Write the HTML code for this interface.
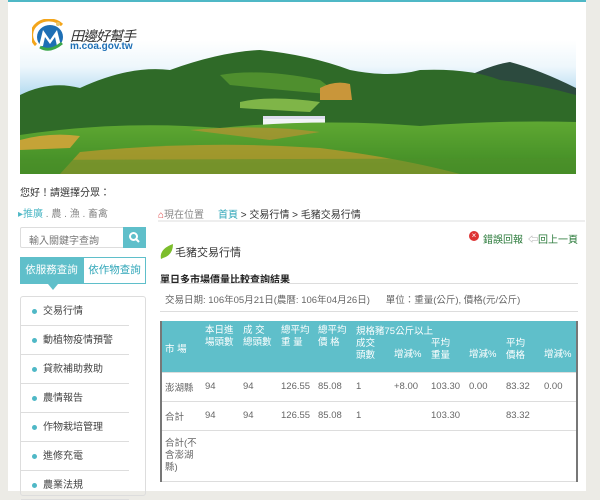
<!DOCTYPE html>
<html><head><meta charset="utf-8"><style>
*{margin:0;padding:0;box-sizing:border-box}
body{width:600px;height:491px;overflow:hidden;background:#ecebe6;font-family:"Liberation Sans","Noto Sans CJK TC",sans-serif;font-size:10px;color:#333;position:relative}
.page{position:absolute;left:8px;top:0;width:578px;height:491px;background:#fff;border-top:2px solid #4fb8c6}
.abs{position:absolute;white-space:nowrap}
.menu div{position:absolute;left:0;width:108px;height:29px;border-bottom:1px solid #ddd;padding-left:22px;line-height:29px;font-size:10px;color:#444}
.menu div:before{content:"";position:absolute;left:11px;top:12px;width:5px;height:5px;border-radius:50%;background:#4fb8c6}
table{border-collapse:collapse;position:absolute;left:160px;top:321px;width:418px;border-left:2px solid #777;border-right:2px solid #777;font-size:9.5px;color:#666}
th{background:#5fbfca;color:#fff;font-weight:normal;text-align:left;vertical-align:top;line-height:12px;padding:0 0 0 3px}
td{border-top:1px solid #ddd;padding:0 0 0 3px;vertical-align:middle;height:29px;border-bottom:1px solid #ddd}
</style></head><body>
<div class="page"></div>
<!-- banner -->
<svg class="abs" style="left:20px;top:40px" width="556" height="134" viewBox="0 0 556 134">
<defs><linearGradient id="sky" x1="0" y1="0" x2="0" y2="1"><stop offset="0" stop-color="#fff"/><stop offset=".2" stop-color="#eef7fc"/><stop offset=".45" stop-color="#a9d6ee"/></linearGradient>
<linearGradient id="g" x1="0" y1="0" x2="0" y2="1"><stop offset="0" stop-color="#5fa832"/><stop offset="1" stop-color="#3f8a25"/></linearGradient></defs>
<rect width="556" height="134" fill="url(#sky)"/>
<path d="M440 40 Q470 25 490 22 Q520 30 556 48 L556 134 L440 134Z" fill="#2c4a3e"/>
<path d="M0 55 Q30 40 60 48 Q110 25 150 30 Q200 12 240 10 Q290 15 330 30 Q370 38 400 30 Q450 28 480 40 Q520 45 556 55 L556 134 L0 134Z" fill="#2f6a28"/>
<path d="M200 35 Q240 28 300 40 L320 55 Q260 50 210 45Z" fill="#4f8f2e"/>
<path d="M220 62 Q250 55 300 62 L290 72 Q250 70 220 68Z" fill="#7fb548"/>
<path d="M300 48 Q315 40 330 44 L332 60 L300 60Z" fill="#c9963a"/>
<rect x="243" y="76" width="62" height="12" fill="#f2f4f6"/>
<rect x="243" y="76" width="62" height="3" fill="#dde"/>
<path d="M0 95 Q100 80 200 88 Q300 78 400 86 Q480 80 556 82 L556 134 L0 134Z" fill="url(#g)"/>
<path d="M0 100 Q30 92 60 96 L50 108 L0 110Z" fill="#d9a53a" opacity=".85"/>
<path d="M60 112 Q180 100 300 108 Q380 118 440 134 L40 134Z" fill="#d99a2e" opacity=".6"/>
<path d="M170 90 Q240 84 300 92 L250 100 Z" fill="#c89032" opacity=".6"/>
<path d="M0 120 L556 118 L556 134 L0 134Z" fill="#4d8f2a" opacity=".5"/>
</svg>
<!-- logo -->
<svg class="abs" style="left:32px;top:19px" width="36" height="34" viewBox="0 0 36 34">
<path d="M4 26 A15 13 0 0 1 30 6" stroke="#f3a51b" stroke-width="3" fill="none"/>
<ellipse cx="18" cy="18" rx="13" ry="12" fill="#1e6fb5"/>
<path d="M7 27 L11 11 L18 21 L25 11 L29 27 L25 27 L23 18 L18 25 L13 18 L11 27Z" fill="#fff"/>
<path d="M8 28 Q18 34 30 24" stroke="#3aa64a" stroke-width="3" fill="none"/>
<circle cx="26" cy="5" r="2" fill="#e9c56a"/>
</svg>
<div class="abs" style="left:70px;top:26px;font-size:14px;color:#333;font-style:italic;letter-spacing:-1px">田邊好幫手</div>
<div class="abs" style="left:70px;top:41px;font-size:10px;color:#1e6fb5;font-weight:bold">m.coa.gov.tw</div>
<div class="abs" style="left:20px;top:184px;font-size:10px">您好！請選擇分眾：</div>
<div class="abs" style="left:18px;top:205px;font-size:10px;color:#888"><span style="color:#4fb8c6">▸推廣</span> . 農 . 漁 . 畜禽</div>
<div class="abs" style="left:158px;top:206px;font-size:10px;color:#888"><span style="color:#d44">⌂</span>現在位置 &nbsp;&nbsp;&nbsp; <span style="color:#2fa6b8">首頁</span> <span style="color:#333">&gt; 交易行情 &gt; 毛豬交易行情</span></div>
<div class="abs" style="left:158px;top:220px;width:427px;height:2px;background:#eee"></div>
<!-- search -->
<div class="abs" style="left:20px;top:227px;width:126px;height:21px;border:1px solid #ddd;border-radius:2px;padding:4px 0 0 8px;color:#777">輸入關鍵字查詢</div>
<div class="abs" style="left:123px;top:227px;width:23px;height:21px;background:#5fbfca"></div>
<svg class="abs" style="left:128px;top:231px" width="13" height="13"><circle cx="5.5" cy="5.5" r="3.5" stroke="#fff" stroke-width="2" fill="none"/><path d="M8 8 L11 11" stroke="#fff" stroke-width="2"/></svg>
<!-- tabs -->
<div class="abs" style="left:20px;top:257px;width:63px;height:27px;background:#5fbfca;color:#fff;line-height:27px;text-align:center;font-size:10.5px">依服務查詢</div>
<div class="abs" style="left:83px;top:257px;width:63px;height:27px;border:1px solid #5fbfca;color:#2fa6b8;line-height:25px;text-align:center;font-size:10.5px">依作物查詢</div>
<div class="abs" style="left:48px;top:284px;width:0;height:0;border-left:5px solid transparent;border-right:5px solid transparent;border-top:6px solid #5fbfca"></div>
<div class="abs menu" style="left:20px;top:296px;width:126px;height:200px;border:1px solid #ddd;border-radius:3px">
<div style="top:0">交易行情</div><div style="top:29px">動植物疫情預警</div><div style="top:58px">貸款補助救助</div><div style="top:87px">農情報告</div><div style="top:116px">作物栽培管理</div><div style="top:145px">進修充電</div><div style="top:174px">農業法規</div>
</div>
<!-- right -->
<div class="abs" style="left:469px;top:231px;width:10px;height:10px;border-radius:50%;background:#d33;color:#fff;font-size:8px;line-height:10px;text-align:center">×</div>
<div class="abs" style="left:483px;top:231px;font-size:10px;color:#2a7a3a">錯誤回報</div>
<div class="abs" style="left:528px;top:231px;font-size:10px;color:#2a7a3a"><span style="color:#999">⇦</span>回上一頁</div>
<svg class="abs" style="left:159px;top:243px" width="16" height="18"><path d="M2 16 Q0 6 14 1 Q14 12 4 15Z" fill="#7cbd2c"/></svg>
<div class="abs" style="left:175px;top:244px;font-size:11px;color:#333">毛豬交易行情</div>
<div class="abs" style="left:160px;top:271px;font-size:10px;font-weight:bold;color:#222">單日多市場價量比較查詢結果</div>
<div class="abs" style="left:160px;top:283px;width:418px;height:1px;background:#ddd"></div>
<div class="abs" style="left:165px;top:292px;font-size:9.5px;color:#666">交易日期: 106年05月21日(農曆: 106年04月26日) &nbsp;&nbsp;&nbsp;&nbsp; 單位：重量(公斤), 價格(元/公斤)</div>
<div class="abs" style="left:160px;top:311px;width:418px;height:1px;background:#ddd"></div>
<table>
<tr style="height:16px"><th rowspan="2" style="width:41px;vertical-align:middle;padding-top:8px">市 場</th><th rowspan="2" style="width:38px;padding-top:4px">本日進<br>場頭數</th><th rowspan="2" style="width:38px;padding-top:4px">成 交<br>總頭數</th><th rowspan="2" style="width:37px;padding-top:4px">總平均<br>重 量</th><th rowspan="2" style="width:38px;padding-top:4px">總平均<br>價 格</th><th colspan="6" style="padding-top:5px">規格豬75公斤以上</th></tr>
<tr style="height:34px"><th style="width:38px">成交<br>頭數</th><th style="width:37px;vertical-align:middle">增減%</th><th style="width:38px">平均<br>重量</th><th style="width:37px;vertical-align:middle">增減%</th><th style="width:38px">平均<br>價格</th><th style="vertical-align:middle">增減%</th></tr>
<tr><td>澎湖縣</td><td>94</td><td>94</td><td>126.55</td><td>85.08</td><td>1</td><td>+8.00</td><td>103.30</td><td>0.00</td><td>83.32</td><td>0.00</td></tr>
<tr><td>合計</td><td>94</td><td>94</td><td>126.55</td><td>85.08</td><td>1</td><td></td><td>103.30</td><td></td><td>83.32</td><td></td></tr>
<tr><td style="height:51px;line-height:12px">合計(不<br>含澎湖<br>縣)</td><td></td><td></td><td></td><td></td><td></td><td></td><td></td><td></td><td></td><td></td></tr>
</table>
</body></html>
